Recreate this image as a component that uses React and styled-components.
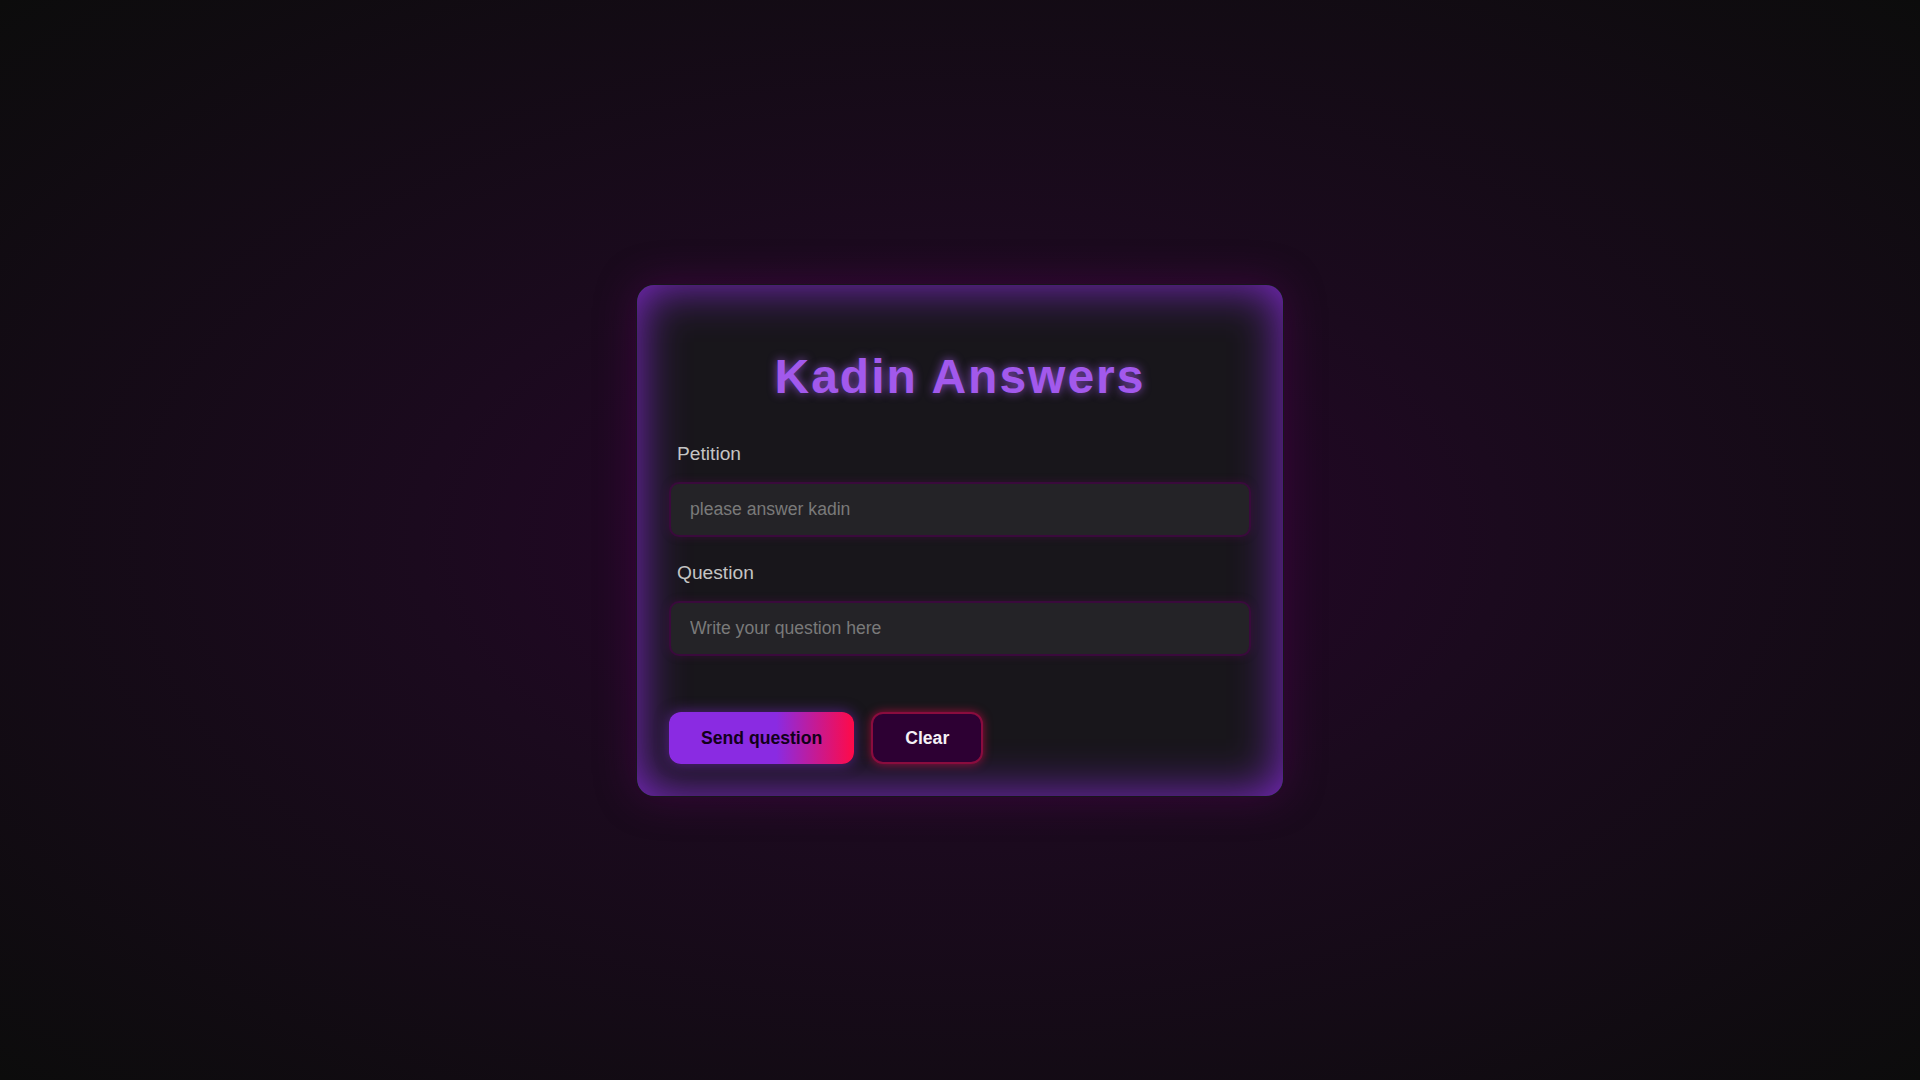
import React, { useState } from 'react';
import styled, { createGlobalStyle } from 'styled-components';

const GlobalStyle = createGlobalStyle`
  * {
    box-sizing: border-box;
  }

  html, body {
    margin: 0;
    height: 100%;
  }

  body {
    font-family: 'Liberation Sans', Arial, sans-serif;
    background: radial-gradient(ellipse at center, #27042b 0%, #1b0a1e 40%, #0c0c0c 100%);
    background-attachment: fixed;
  }
`;

const Page = styled.div`
  min-height: 100vh;
  display: flex;
  align-items: center;
  justify-content: center;
`;

const Card = styled.div`
  width: 648px;
  padding: 32px;
  border: 1px solid transparent;
  border-radius: 18px;
  background: #18161b;
  box-shadow:
    inset 0 0 48px rgba(128, 42, 205, 1),
    0 0 40px rgba(110, 0, 110, 0.35);
`;

const Title = styled.h1`
  margin: 32px 0 39px;
  text-align: center;
  font-size: 48px;
  font-weight: 700;
  letter-spacing: 2px;
  color: #a259ec;
  text-shadow: 0 0 10px rgba(162, 89, 236, 0.75);
`;

const Field = styled.div`
  display: flex;
  flex-direction: column;
  gap: 17px;
  margin-bottom: 25px;
`;

const Label = styled.label`
  padding-left: 8px;
  font-size: 19.2px;
  color: #c4c4c4;
`;

const Input = styled.input`
  width: 100%;
  padding: 15px 19px;
  font-family: 'Liberation Sans', Arial, sans-serif;
  font-size: 17.6px;
  color: #e6e6e6;
  background: #242327;
  border: 2px solid #3a0a3c;
  border-radius: 10px;
  outline: none;
  box-shadow: 0 0 8px rgba(120, 0, 110, 0.25);

  &::placeholder {
    color: #7a7a7a;
  }
`;

const Actions = styled.div`
  display: flex;
  gap: 17px;
  margin-top: 56px;
`;

const Button = styled.button`
  padding: 16px 32px;
  font-family: 'Liberation Sans', Arial, sans-serif;
  font-size: 17.6px;
  font-weight: 700;
  border-radius: 12px;
  cursor: pointer;
  line-height: 20px;
`;

const SendButton = styled(Button)`
  border: none;
  color: #12001a;
  background: linear-gradient(90deg, #8a2be2 0%, #8a2be2 58%, #ff0a48 100%);
  box-shadow: 0 0 14px rgba(138, 43, 226, 0.55);
`;

const ClearButton = styled(Button)`
  padding: 14px 32px;
  border: 2px solid #8a0c3e;
  color: #f4f0f6;
  background: #2d0033;
  box-shadow: 0 0 10px rgba(255, 10, 84, 0.55);
`;

export default function App() {
  const [petition, setPetition] = useState('');
  const [question, setQuestion] = useState('');

  const clear = () => {
    setPetition('');
    setQuestion('');
  };

  return (
    <>
      <GlobalStyle />
      <Page>
        <Card>
          <Title>Kadin Answers</Title>
          <Field>
            <Label htmlFor="petition">Petition</Label>
            <Input
              id="petition"
              placeholder="please answer kadin"
              value={petition}
              onChange={(e) => setPetition(e.target.value)}
            />
          </Field>
          <Field>
            <Label htmlFor="question">Question</Label>
            <Input
              id="question"
              placeholder="Write your question here"
              value={question}
              onChange={(e) => setQuestion(e.target.value)}
            />
          </Field>
          <Actions>
            <SendButton>Send question</SendButton>
            <ClearButton onClick={clear}>Clear</ClearButton>
          </Actions>
        </Card>
      </Page>
    </>
  );
}
